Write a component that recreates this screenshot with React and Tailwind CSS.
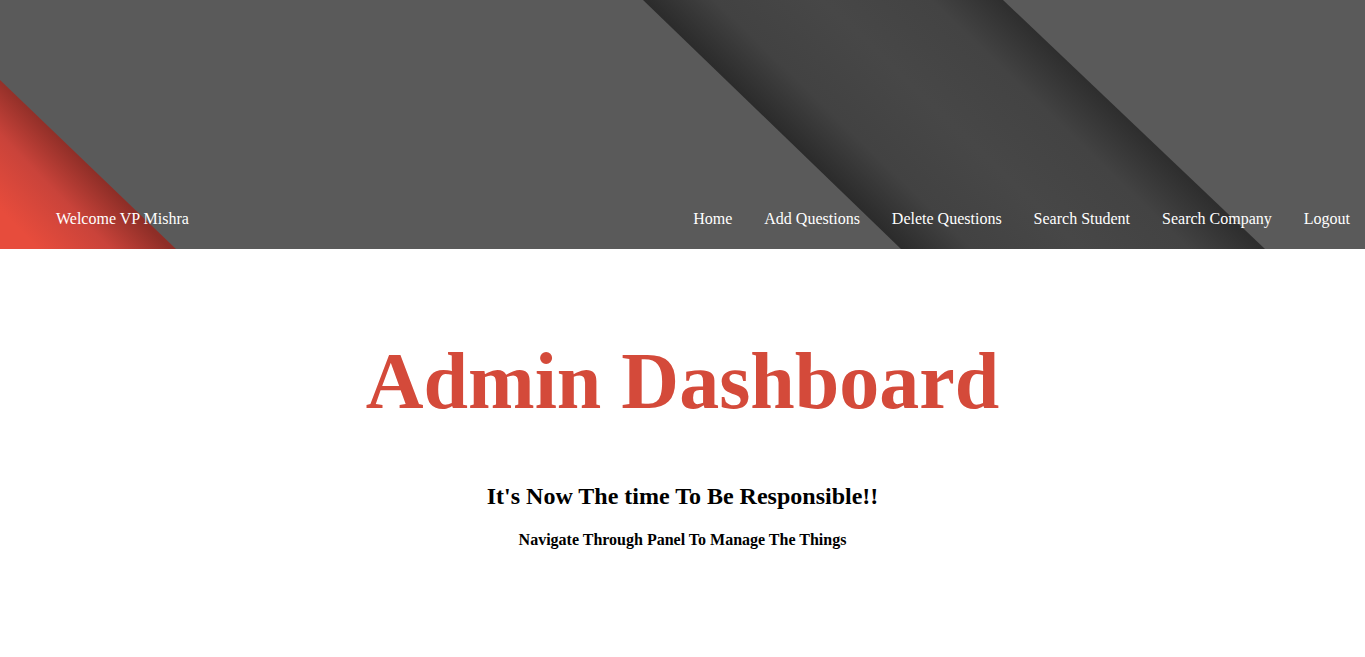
import React from "react";

function HeaderBg() {
  return (
    <svg
      className="absolute inset-0 w-full h-full"
      viewBox="0 0 1365 249"
      preserveAspectRatio="none"
      aria-hidden="true"
    >
      <defs>
        <linearGradient id="band" gradientUnits="userSpaceOnUse" x1="772" y1="124.5" x2="945.5" y2="-55.5">
          <stop offset="0" stopColor="#2b2b2b" />
          <stop offset="0.2" stopColor="#424242" />
          <stop offset="0.5" stopColor="#474747" />
          <stop offset="0.8" stopColor="#434343" />
          <stop offset="1" stopColor="#2e2e2e" />
        </linearGradient>
        <linearGradient id="red" gradientUnits="userSpaceOnUse" x1="88" y1="164" x2="20" y2="230">
          <stop offset="0" stopColor="#8e2e27" />
          <stop offset="0.45" stopColor="#c9433a" />
          <stop offset="1" stopColor="#e74c3c" />
        </linearGradient>
      </defs>
      <rect x="0" y="0" width="1365" height="249" fill="#5a5a5a" />
      <polygon points="643,0 1003,0 1265,249 901,249" fill="url(#band)" />
      <polygon points="0,80 176,249 0,249" fill="url(#red)" />
    </svg>
  );
}

export default function App() {
  const links = ["Home", "Add Questions", "Delete Questions", "Search Student", "Search Company", "Logout"];
  return (
    <div className="min-h-[657px] bg-white" style={{ fontFamily: '"Liberation Serif", "Times New Roman", serif' }}>
      <header className="relative h-[249px] overflow-hidden">
        <HeaderBg />
        <nav className="relative flex h-full items-end">
          <div className="flex h-[60px] w-full items-center justify-between pl-[56px] pr-[15px] text-[16px] text-white">
            <span>Welcome VP Mishra</span>
            <ul className="flex items-center gap-[32px]">
              {links.map((l) => (
                <li key={l}>
                  <a href="#" className="text-white">{l}</a>
                </li>
              ))}
            </ul>
          </div>
        </nav>
      </header>
      <main className="flex flex-col items-center pt-[92px] text-center">
        <h1 className="text-[80px] font-bold leading-none text-[#d44a3a]">Admin Dashboard</h1>
        <h2 className="mt-[63px] text-[24px] font-bold leading-none text-black">It's Now The time To Be Responsible!!</h2>
        <h4 className="mt-[24px] text-[16px] font-bold leading-none text-black">Navigate Through Panel To Manage The Things</h4>
      </main>
    </div>
  );
}
